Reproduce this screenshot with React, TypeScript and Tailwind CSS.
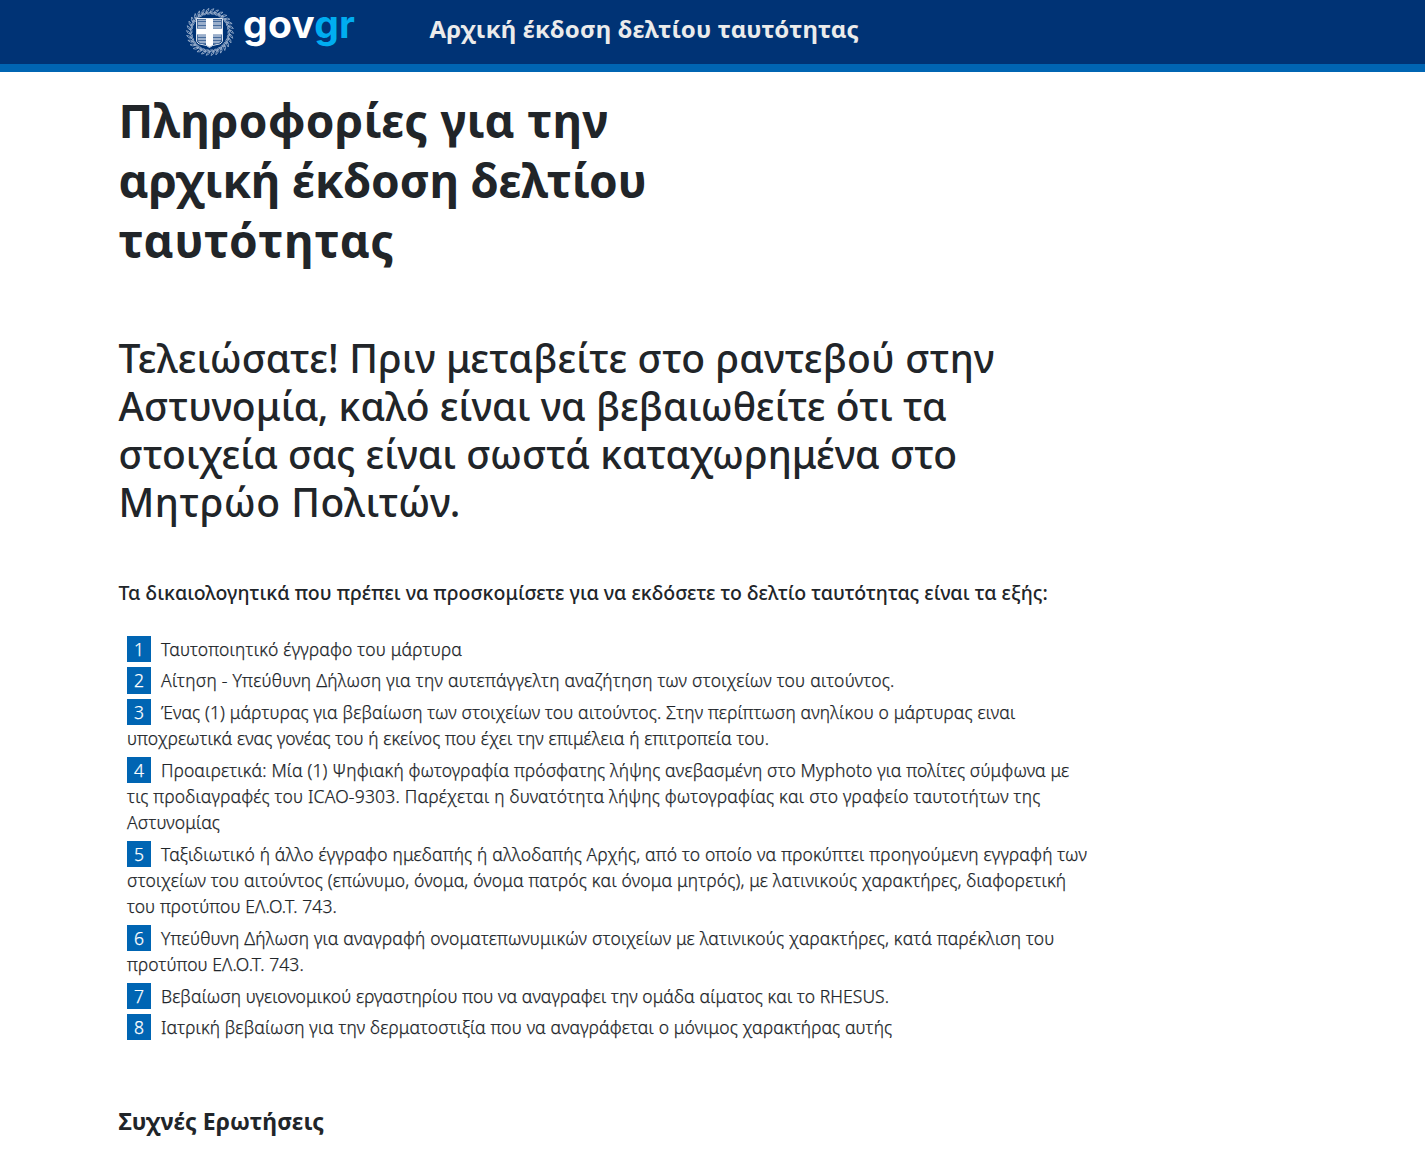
type Line = { text: string; tracking: string };

const titleLines: Line[] = [
  { text: 'Πληροφορίες για την', tracking: 'tracking-[0.3px]' },
  { text: 'αρχική έκδοση δελτίου', tracking: 'tracking-[-0.2px]' },
  { text: 'ταυτότητας', tracking: 'tracking-[0.9px]' },
];

const leadLines: Line[] = [
  { text: 'Τελειώσατε! Πριν μεταβείτε στο ραντεβού στην', tracking: 'tracking-[0.15px]' },
  { text: 'Αστυνομία, καλό είναι να βεβαιωθείτε ότι τα', tracking: 'tracking-[0.06px]' },
  { text: 'στοιχεία σας είναι σωστά καταχωρημένα στο', tracking: 'tracking-[0.03px]' },
  { text: 'Μητρώο Πολιτών.', tracking: 'tracking-[0.5px]' },
];

const documents: Line[][] = [
  [{ text: 'Ταυτοποιητικό έγγραφο του μάρτυρα', tracking: 'tracking-[0.2px]' }],
  [{ text: 'Αίτηση - Υπεύθυνη Δήλωση για την αυτεπάγγελτη αναζήτηση των στοιχείων του αιτούντος.', tracking: 'tracking-[0.245px]' }],
  [
    { text: 'Ένας (1) μάρτυρας για βεβαίωση των στοιχείων του αιτούντος. Στην περίπτωση ανηλίκου ο μάρτυρας ειναι', tracking: 'tracking-[0.137px]' },
    { text: 'υποχρεωτικά ενας γονέας του ή εκείνος που έχει την επιμέλεια ή επιτροπεία του.', tracking: 'tracking-[0.087px]' },
  ],
  [
    { text: 'Προαιρετικά: Μία (1) Ψηφιακή φωτογραφία πρόσφατης λήψης ανεβασμένη στο Myphoto για πολίτες σύμφωνα με', tracking: 'tracking-[0.136px]' },
    { text: 'τις προδιαγραφές του ICAO-9303. Παρέχεται η δυνατότητα λήψης φωτογραφίας και στο γραφείο ταυτοτήτων της', tracking: 'tracking-[0.212px]' },
    { text: 'Αστυνομίας', tracking: 'tracking-[0.139px]' },
  ],
  [
    { text: 'Ταξιδιωτικό ή άλλο έγγραφο ημεδαπής ή αλλοδαπής Αρχής, από το οποίο να προκύπτει προηγούμενη εγγραφή των', tracking: 'tracking-[0.191px]' },
    { text: 'στοιχείων του αιτούντος (επώνυμο, όνομα, όνομα πατρός και όνομα μητρός), με λατινικούς χαρακτήρες, διαφορετική', tracking: 'tracking-[0.163px]' },
    { text: 'του προτύπου ΕΛ.Ο.Τ. 743.', tracking: 'tracking-[0.1px]' },
  ],
  [
    { text: 'Υπεύθυνη Δήλωση για αναγραφή ονοματεπωνυμικών στοιχείων με λατινικούς χαρακτήρες, κατά παρέκλιση του', tracking: 'tracking-[0.193px]' },
    { text: 'προτύπου ΕΛ.Ο.Τ. 743.', tracking: 'tracking-[0.09px]' },
  ],
  [{ text: 'Βεβαίωση υγειονομικού εργαστηρίου που να αναγραφει την ομάδα αίματος και το RHESUS.', tracking: 'tracking-[0.07px]' }],
  [{ text: 'Ιατρική βεβαίωση για την δερματοστιξία που να αναγράφεται ο μόνιμος χαρακτήρας αυτής', tracking: 'tracking-[0.122px]' }],
];

const leafAngles = Array.from({ length: 30 }, (_, i) => i * 12 + 6);

function Emblem() {
  return (
    <svg width="50" height="50" viewBox="-25 -25 50 50" className="shrink-0" aria-hidden="true">
      {/* laurel wreath */}
      <g fill="none" stroke="#a9bbd4" strokeWidth="0.7">
        {leafAngles.map((a) => (
          <g key={a} transform={`rotate(${a})`}>
            <path d="M-2.4 -19.2 Q-1.6 -23 1.4 -23.6 Q1.2 -20.4 -2.4 -19.2Z" />
            <path d="M-1 -18.2 Q1.6 -20.4 3 -19 Q1.4 -17.2 -1 -18.2Z" />
            <path d="M-2 -21 L0.5 -19" />
          </g>
        ))}
      </g>
      {/* shield with cross */}
      <path d="M-13.5 -13.5 H12.5 V8 Q12.5 12 7 12.5 Q2 13 -0.5 15.5 Q-3 13 -8 12.5 Q-13.5 12 -13.5 8Z" fill="#003375" stroke="#dfe6ef" strokeWidth="1" />
      <path d="M-12.5 -12.5 H-4 V-4 H-12.5Z M3 -12.5 H11.5 V-4 H3Z M-12.5 2.5 H-4 V11.5 H-8 Q-12.5 11 -12.5 7Z M3 2.5 H11.5 V7 Q11.5 11 7 11.5 H3Z" fill="#9bafcb" />
      <path d="M-12.5 -10.5 H11.5 M-12.5 -6.5 H11.5 M-12.5 5.5 H11.5 M-12 8.5 H11" stroke="#456a9b" strokeWidth="1.1" />
      <path d="M-4 -13 H3 V-3.5 H12 V2.5 H3 V13 L-0.5 15 L-4 13 V2.5 H-13 V-3.5 H-4Z" fill="#fff" />
    </svg>
  );
}

export default function App() {
  return (
    <div className="min-h-[1170px] bg-white font-['Noto_Sans','Open_Sans',sans-serif] text-[#212529]">
      <header className="flex h-[72px] items-start border-b-8 border-[#0065b3] bg-[#003375] pl-[185px]">
        <div className="flex h-16 w-[244.5px] items-center">
          <Emblem />
          <svg width="130" height="60" viewBox="0 0 130 60" className="ml-2 shrink-0 overflow-visible">
            <text x="0" y="36" textLength="112" fill="#fff" fontFamily="Inter, sans-serif" fontSize="39" fontWeight="700">
              gov<tspan fill="#00adf0">gr</tspan>
            </text>
          </svg>
        </div>
        <span className="mt-[11px] whitespace-nowrap text-2xl/9 font-bold tracking-[0.16px] text-[#ebebeb]">
          Αρχική έκδοση δελτίου ταυτότητας
        </span>
      </header>

      <main className="pl-[118.5px] pt-[18px]">
        <h1 className="text-[46px]/[60px] font-bold">
          {titleLines.map((l) => (
            <span key={l.text} className={`block whitespace-nowrap ${l.tracking}`}>{l.text}</span>
          ))}
        </h1>

        <h2 className="mt-16 text-[39px]/[48px] font-medium">
          {leadLines.map((l) => (
            <span key={l.text} className={`block whitespace-nowrap ${l.tracking}`}>{l.text}</span>
          ))}
        </h2>

        <p className="mt-[52px] whitespace-nowrap text-[19.5px]/[30px] font-medium tracking-[0.015px]">
          Τα δικαιολογητικά που πρέπει να προσκομίσετε για να εκδόσετε το δελτίο ταυτότητας είναι τα εξής:
        </p>

        <ol className="mt-[27.95px] flex flex-col gap-[5.275px] pl-[8.5px] text-[17.5px]/[26.25px] font-light [-webkit-text-stroke:0.25px]">
          {documents.map((lines, i) => (
            <li key={lines[0].text}>
              {lines.map((l, j) => (
                <div key={l.text} className="flex whitespace-nowrap">
                  {j === 0 && (
                    <span className="mr-[10px] w-6 shrink-0 bg-[#0065b3] text-center text-white">{i + 1}</span>
                  )}
                  <span className={l.tracking}>{l.text}</span>
                </div>
              ))}
            </li>
          ))}
        </ol>

        <h3 className="mt-[63px] text-[23px]/9 font-bold tracking-[0.05px]">Συχνές Ερωτήσεις</h3>
      </main>
    </div>
  );
}
